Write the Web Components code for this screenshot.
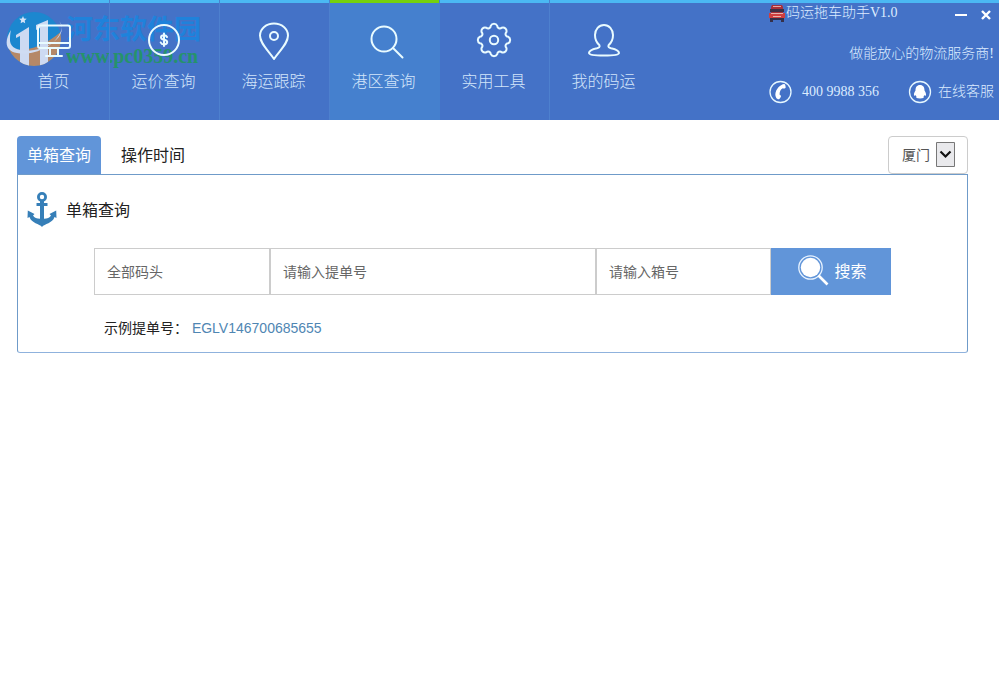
<!DOCTYPE html>
<html lang="zh-CN">
<head>
<meta charset="utf-8">
<title>码运拖车助手V1.0</title>
<style>
  body { margin: 0; background: #fff; font-family: "Liberation Sans", "Noto Sans CJK SC", sans-serif; font-size: 14px; line-height: 20px; color: #222; }
</style>
</head>
<body>
<app-shell></app-shell>
<script>
const define = (name, html, setup) => customElements.define(name, class extends HTMLElement {
  constructor() {
    super();
    this.attachShadow({ mode: 'open' }).innerHTML = html;
  }
  connectedCallback() { if (setup) setup(this, this.shadowRoot); }
});

/* Outline of a cog with eight rounded teeth, centred on 18,18 */
function cogPath() {
  const pt = deg => {
    const a = deg * Math.PI / 180;
    return (18 + 14.5 * Math.cos(a)).toFixed(2) + ' ' + (18 + 14.5 * Math.sin(a)).toFixed(2);
  };
  let d = 'M' + pt(-13);
  for (let k = 0; k < 8; k++) d += 'A3.6 3.6 0 0 1 ' + pt(k * 45 + 13) + 'A2.6 2.6 0 0 0 ' + pt(k * 45 + 32);
  return d + 'Z';
}

const icons = {
  home: '<path d="M4 3.500h28a2 2 0 0 1 2 2V24a2 2 0 0 1-2 2H4a2 2 0 0 1-2-2V5.500a2 2 0 0 1 2-2ZM2 21h32M14 26v7M22 26v7M10 34h16"/>',
  price: '<circle cx="18" cy="18" r="15"/><path d="M21 15c-.6-1.300-1.700-1.800-3-1.800-1.800 0-3 .8-3 2.300 0 3 6.200 1.500 6.200 4.500 0 1.600-1.300 2.400-3.200 2.400-1.600 0-2.800-.6-3.300-1.900M18 11.500v12.500"/>',
  pin: '<path d="M18 37C13 29 4 22 4 13.500A14 12 0 0 1 32 13.500C32 22 23 29 18 37Z"/><circle cx="18" cy="14" r="4"/>',
  search: '<circle cx="18" cy="17" r="12.500"/><path d="M27 26 36.500 35.500"/>',
  cog: '<path d="' + cogPath() + '"/><circle cx="18" cy="18" r="4.200"/>',
  user: '<path d="M18 3c5 0 9 4.200 9 10 0 5-2 8-4.300 10-1 2 .3 2.700 2.300 3.300 4.500 1 8 2.500 8 4.700 0 1.800-4 2.500-15 2.500S3 32.800 3 31c0-2.200 3.500-3.700 8-4.700 2-.6 3.300-1.300 2.300-3.300C11 21 9 18 9 13 9 7.200 13 3 18 3Z"/>'
};

define('nav-item', `
<style>
  :host { display: block; flex: 0 1 110px; min-width: 0; box-sizing: border-box; border-right: 1px solid #4d80ce; }
  a { display: flex; flex-direction: column; align-items: center; gap: 10px; height: 100%; box-sizing: border-box; padding: 19px 2px 0 0; color: #d3e5fa; text-decoration: none; font: 300 16px/20px "Noto Sans CJK SC", sans-serif; white-space: nowrap; border-top: 3px solid #4bb8f3; }
  svg { width: 36px; height: 38px; overflow: visible; fill: none; stroke: #e9fbff; stroke-width: 2; stroke-linecap: round; stroke-linejoin: round; }
  :host([active]) { border-color: #4580ce; background: #4580ce; }
  :host([active]) a { border-top-color: #75d10c; }
  :host([last]) { border-right-color: transparent; }
</style>
<a href="#"><svg viewBox="0 0 36 38" aria-hidden="true"></svg><slot></slot></a>`,
(host, root) => { root.querySelector('svg').innerHTML = icons[host.getAttribute('icon')]; });

define('site-mark', `
<style>
  :host { position: absolute; left: 5px; top: 10px; display: flex; align-items: center; gap: 1px; pointer-events: none; }
  svg { width: 60px; height: 58px; flex: none; opacity: .85; }
  .words { display: flex; flex-direction: column; white-space: nowrap; }
  b { font: 700 27px/34px "Noto Sans CJK SC", sans-serif; color: #1687e0; opacity: .8; }
  i { font: 700 20px/22px "Liberation Serif", serif; color: #1e9b55; opacity: .8; }
</style>
<svg viewBox="0 0 60 58" aria-hidden="true">
  <defs><clipPath id="disc"><circle cx="29" cy="29" r="27"/></clipPath></defs>
  <g clip-path="url(#disc)">
    <path d="M0 0h60v58H0Z" fill="#168bd1"/>
    <path d="M0 36c12 8 38 4 60-18v42H0Z" fill="#c98d58"/>
    <path d="m11 25 13-8v41h-9V26l-4 2ZM31 15l12-5v48h-8V18l-4 2Z" fill="#e6edfa"/>
  </g>
  <path d="M6 20C-1 31 0 41 12 43c16 3 38-6 44-22 2-5 0-8-2-10 8 10-2 22-17 27C22 43 6 41 5 31c0-4 0-7 1-11Z" fill="#e8effb"/>
  <path d="m18 6 1 2.400 2.700.3-2 1.900.5 2.700-2.200-1.300-2.400 1.300.5-2.700-2-1.900 2.800-.3Z" fill="#eef8ff"/>
</svg>
<div class="words"><b>河东软件园</b><i>www.pc0359.cn</i></div>`);

define('window-info', `
<style>
  :host { display: flex; flex-direction: column; flex: none; width: 230px; box-sizing: border-box; padding: 3px 5px 0 0; color: #dcecff; font: 300 14px/20px "Liberation Serif", "Noto Sans CJK SC", serif; }
  .row { display: flex; align-items: center; }
  .title { padding-right: 2px; }
  .title svg { width: 16px; height: 18px; margin-right: 1px; }
  .title .min { margin-left: auto; }
  button { padding: 0; border: 0; background: none; width: 12px; height: 20px; color: #fff; }
  button + button { margin-left: 13px; }
  .title button svg { width: 12px; height: 12px; margin: 4px 0 0; display: block; stroke: #fff; stroke-width: 2; fill: none; }
  .slogan { justify-content: flex-end; margin-top: 21px; }
  .contact { justify-content: space-between; margin-top: 16px; height: 24px; }
  a { display: flex; align-items: center; color: inherit; text-decoration: none; white-space: nowrap; }
  a svg { width: 24px; height: 24px; }
  .tel { gap: 9px; }
  .qq { gap: 6px; }
</style>
<div class="row title">
  <svg viewBox="0 0 16 18" aria-hidden="true"><path d="M3 1h10l1 2v12H2V3Z" fill="#a8303a"/><path d="M1 5h14v3H1Z" fill="#402f45"/><path d="M4 2h8v1H4Z" fill="#e3a7a4"/><path d="M0 9h16v5H0Z" fill="#cf3f40"/><path d="M2 9h12v1H2ZM4 12h8v1H4Z" fill="#e9b3ad"/><path d="M1 14h3v4H1ZM12 14h3v4h-3ZM4 14h8v2H4Z" fill="#35304a"/></svg>
  <span>码运拖车助手V1.0</span>
  <button class="min" aria-label="最小化"><svg viewBox="0 0 12 12"><path d="M0 6h12"/></svg></button>
  <button aria-label="关闭"><svg viewBox="0 0 12 12"><path d="m2 2 8 8M10 2l-8 8" stroke-width="2.400"/></svg></button>
</div>
<div class="row slogan">做能放心的物流服务商!</div>
<div class="row contact">
  <a class="tel" href="tel:4009988356"><svg viewBox="0 0 24 24" aria-hidden="true"><circle cx="11.500" cy="12" r="10.500" fill="none" stroke="#e6f7ff" stroke-width="1.300"/><path d="M12.500 5c1.300-.9 3.300-1.300 3.700-.3l.5 2.500c0 1-1.900 1.700-2.900 1-2.200 1-3.400 3.600-3.200 6.500 1.100.2 1.700 1.500 1.200 2.300l-1.400 2c-.8.800-2.500.1-3.200-1.200C4.800 13.500 8 7.200 12.500 5Z" fill="#fff"/></svg><span>400 9988 356</span></a>
  <a class="qq" href="#"><svg viewBox="0 0 24 24" aria-hidden="true"><circle cx="12" cy="12" r="10.500" fill="none" stroke="#e6f7ff" stroke-width="1.300"/><path d="M12 5c3.200 0 4.500 2.300 4.500 5.500 1 1.600 1.900 3.600 1.400 5-.4.500-1 0-1.400-.5-.2.700-.6 1.200-1 1.600 1 1.200-.4 1.900-3.500 1.900s-4.500-.7-3.500-1.900c-.4-.4-.8-.9-1-1.600-.4.500-1 1-1.400.5-.5-1.400.4-3.400 1.400-5C7.500 7.300 8.800 5 12 5Z" fill="#fff"/></svg><span>在线客服</span></a>
</div>`);

define('app-header', `
<style>
  :host { display: block; position: relative; margin-right: 1px; background: linear-gradient(#4bb8f3 3px, #4472c7 3px); }
  .bar { position: relative; display: flex; justify-content: space-between; }
  nav { display: flex; flex: 0 1 660px; min-width: 0; height: 120px; }
</style>
<site-mark></site-mark>
<div class="bar">
  <nav>
    <nav-item icon="home">首页</nav-item>
    <nav-item icon="price">运价查询</nav-item>
    <nav-item icon="pin">海运跟踪</nav-item>
    <nav-item icon="search" active>港区查询</nav-item>
    <nav-item icon="cog">实用工具</nav-item>
    <nav-item icon="user" last>我的码运</nav-item>
  </nav>
  <window-info></window-info>
</div>`);

define('port-select', `
<style>
  :host { display: block; position: relative; width: 80px; height: 38px; }
  select { appearance: none; width: 100%; height: 100%; box-sizing: border-box; padding: 0 34px 2px 13px; border: 1px solid #ccc; border-radius: 4px; background: #fff; color: #555; font: 400 14px/20px "Noto Sans CJK SC", sans-serif; }
  svg { position: absolute; right: 12px; top: 6px; width: 20px; height: 25px; pointer-events: none; }
</style>
<select aria-label="港口"><option>厦门</option></select>
<svg viewBox="0 0 20 25" aria-hidden="true"><path d="M.5.5h18v24H.5Z" fill="#e9e9ec" stroke="#777"/><path d="m4.500 9.500 5 5 5-5" fill="none" stroke="#111" stroke-width="2.200"/></svg>`);

define('tab-bar', `
<style>
  :host { display: flex; align-items: flex-end; justify-content: space-between; }
  .tabs { display: flex; }
  button { height: 38px; padding: 0 10px 2px; border: 0; border-radius: 4px 4px 0 0; background: none; color: #222; font: 400 16px/24px "Noto Sans CJK SC", sans-serif; }
  button + button { margin-left: 10px; }
  button[aria-selected=true] { background: #6195d9; color: #fff; }
</style>
<div class="tabs" role="tablist"><button role="tab" aria-selected="true">单箱查询</button><button role="tab" aria-selected="false">操作时间</button></div>
<port-select></port-select>`);

define('search-form', `
<style>
  :host { display: block; margin: 21px 76px 0; }
  form { display: grid; grid-template-columns: 176fr 326fr 175fr 120px; height: 47px; margin: 0; }
  input { min-width: 0; box-sizing: border-box; padding: 0 12px; border: 1px solid #ccc; border-radius: 0; background: #fff; font: 400 14px/20px "Liberation Sans", "Noto Sans CJK SC", sans-serif; color: #333; }
  input::placeholder { color: #666; opacity: 1; }
  button { display: flex; align-items: center; justify-content: center; gap: 5px; padding: 0 0 3px 2px; border: 0; background: #6195d9; color: #fff; font: 400 16px/24px "Noto Sans CJK SC", sans-serif; }
  svg { width: 32px; height: 32px; }
</style>
<form onsubmit="return false">
  <input aria-label="码头" placeholder="全部码头">
  <input aria-label="提单号" placeholder="请输入提单号">
  <input aria-label="箱号" placeholder="请输入箱号">
  <button><svg viewBox="0 0 32 32" aria-hidden="true"><circle cx="13.500" cy="13.500" r="11.700" fill="none" stroke="#e8f3ff" stroke-width="1.300"/><circle cx="13.500" cy="13.500" r="9.700" fill="#fff"/><path d="m21.500 21.500 9 9" stroke="#fff" stroke-width="2.600"/></svg>搜索</button>
</form>`);

define('query-panel', `
<style>
  :host { display: block; border: 1px solid #6f9bc9; border-bottom-color: #8fb2dd; border-radius: 0 0 3px 3px; padding: 16px 0 13px; }
  h2 { display: flex; align-items: center; gap: 9px; margin: 0 0 0 9px; font: 400 16px/36px "Noto Sans CJK SC", sans-serif; color: #222; }
  h2 svg { width: 30px; height: 36px; }
  p { margin: 22px 76px 0; padding-left: 10px; line-height: 22px; }
  a { color: #4f86b3; text-decoration: none; }
</style>
<h2><svg viewBox="0 0 30 36" aria-hidden="true"><g fill="none" stroke="#367fb8"><circle cx="15" cy="6" r="3.600" stroke-width="2.800"/><path d="M15 10v20" stroke-width="4"/><path d="M9.500 13.500h11" stroke-width="3"/></g><path d="M15 36C12.500 32.500 4.500 32.500 2.500 26L.5 27 .8 19.500 7.500 23 6 24.500c1.300 2.300 3.800 3 7 3.300L15 26l2 1.800c3.200-.3 5.700-1 7-3.300L22.500 23l6.700-3.500L29.500 27l-2-1C25.500 32.500 17.500 32.500 15 36Z" fill="#367fb8"/></svg>单箱查询</h2>
<search-form></search-form>
<p>示例提单号： <a href="#">EGLV146700685655</a></p>`);

define('app-shell', `
<style>
  :host { display: block; }
  main { margin: 16px 32px 0 17px; }
</style>
<app-header></app-header>
<main><tab-bar></tab-bar><query-panel></query-panel></main>`);
</script>
</body>
</html>
